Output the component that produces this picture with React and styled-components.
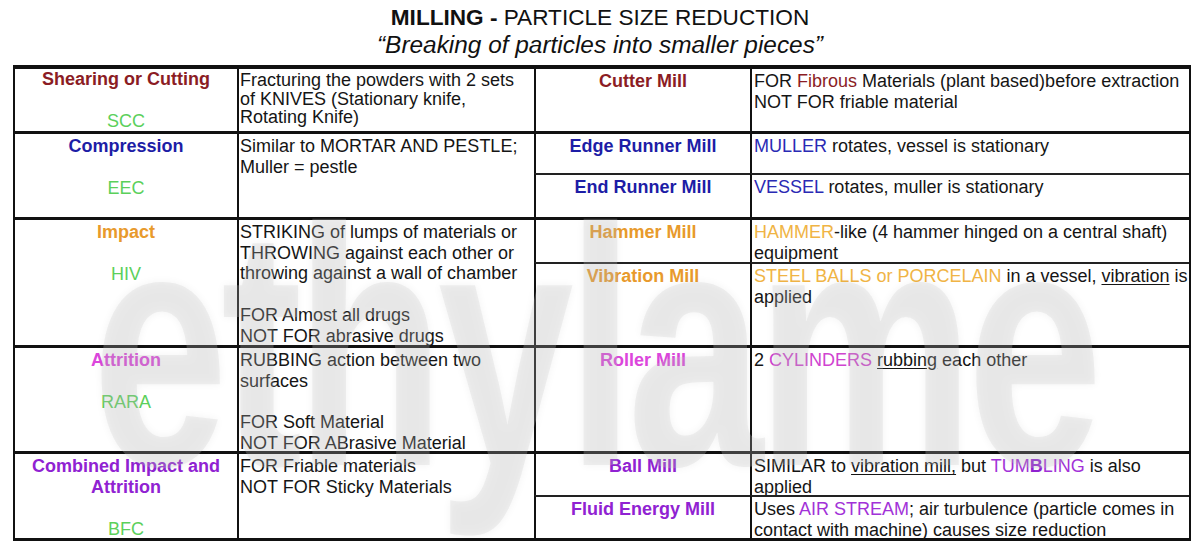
import React from "react";
import styled, { createGlobalStyle } from "styled-components";

const GlobalStyle = createGlobalStyle`
  html, body {
    margin: 0;
    padding: 0;
    background: #fff;
  }
  body {
    font-family: "Liberation Sans", Arial, sans-serif;
    color: #151515;
  }
`;

// palette taken from the chart
const MAROON = "#8b1c24";
const BLUE = "#1d1da6";
const BLUE_TEXT = "#2a2ab4";
const ORANGE = "#e89a2c";
const ORANGE_TEXT = "#f0b445";
const MAGENTA = "#dc46dc";
const MAGENTA_TEXT = "#d044d0";
const PURPLE = "#9022d2";
const PURPLE_TEXT = "#a232d8";
const GREEN = "#5bd05b";

const Page = styled.div`
  position: relative;
  width: 1200px;
  height: 556px;
  overflow: hidden;
  background: #fff;
`;

const Heading = styled.header`
  height: 65px;
  box-sizing: border-box;
  padding-top: 5px;
  text-align: center;
  color: #111;
`;

const Title = styled.h1`
  margin: 0;
  font-size: 22.6px;
  font-weight: normal;
  line-height: 26px;

  b {
    font-weight: bold;
  }
`;

const Subtitle = styled.p`
  margin: 0;
  font-size: 24.4px;
  font-style: italic;
  line-height: 27px;
`;

const Table = styled.div`
  margin-left: 13px;
  width: 1178px;
  box-sizing: border-box;
  border: 2px solid #111;
  border-top-width: 4px;
  border-bottom-width: 3px;
`;

const Group = styled.div`
  display: grid;
  grid-template-columns: 222px 297px 216px 439px;
  grid-template-rows: ${(p) => p.$rows};

  & + & {
    border-top: 3px solid #111;
  }
`;

const Method = styled.div`
  grid-row: 1 / -1;
  padding-top: ${(p) => p.$pad || "2px"};
  text-align: center;
  font-size: 18px;
  font-weight: bold;
  line-height: 21px;
  color: ${(p) => p.$color};
`;

const Code = styled.div`
  margin-top: 21px;
  font-weight: normal;
  color: ${GREEN};
`;

const Desc = styled.div`
  grid-row: 1 / -1;
  border-left: 2px solid #111;
  padding: 2px 2px 0 1px;
  font-size: 18px;
  line-height: ${(p) => p.$lh || "20.7px"};
  white-space: nowrap;
`;

const Gap = styled.div`
  height: ${(p) => p.$h || "20.7px"};
`;

const MillName = styled.div`
  border-left: 2px solid #111;
  border-top: ${(p) => (p.$split ? "2px solid #222" : "none")};
  padding-top: 2px;
  text-align: center;
  font-size: 18px;
  font-weight: bold;
  line-height: 21px;
  color: ${(p) => p.$color};
`;

const MillText = styled.div`
  border-left: 2px solid #111;
  border-top: ${(p) => (p.$split ? "2px solid #222" : "none")};
  padding: 2px 2px 0 2px;
  font-size: 18px;
  line-height: 20.7px;
  white-space: nowrap;
`;

const Hl = styled.span`
  color: ${(p) => p.$c};
  font-weight: ${(p) => (p.$bold ? "bold" : "normal")};
`;

const U = styled.span`
  text-decoration: underline;
  text-underline-offset: 2px;
`;

// faint watermark lying over the chart
const Watermark = styled.div`
  position: absolute;
  left: 92px;
  top: 177px;
  font-family: "Liberation Sans", Arial, sans-serif;
  font-size: 340px;
  font-weight: bold;
  line-height: 340px;
  letter-spacing: -10px;
  color: rgba(200, 200, 200, 0.26);
  text-shadow: 0 0 10px rgba(0, 0, 0, 0.05);
  transform: scaleX(0.72);
  transform-origin: left top;
  pointer-events: none;
  white-space: nowrap;
`;

const App = () => {
  return (
    <Page>
      <GlobalStyle />
      <Heading>
        <Title>
          <b>MILLING -</b> PARTICLE SIZE REDUCTION
        </Title>
        <Subtitle>“Breaking of particles into smaller pieces”</Subtitle>
      </Heading>

      <Table>
        <Group $rows="62px">
          <Method $color={MAROON} $pad="0px">
            Shearing or Cutting
            <Code>SCC</Code>
          </Method>
          <Desc $lh="18.5px">
            Fracturing the powders with 2 sets
            <br />
            of KNIVES (Stationary knife,
            <br />
            Rotating Knife)
          </Desc>
          <MillName $color={MAROON}>Cutter Mill</MillName>
          <MillText>
            FOR <Hl $c={MAROON}>Fibrous</Hl> Materials (plant based)before extraction
            <br />
            NOT FOR friable material
          </MillText>
        </Group>

        <Group $rows="39px 44px">
          <Method $color={BLUE}>
            Compression
            <Code>EEC</Code>
          </Method>
          <Desc>
            Similar to MORTAR AND PESTLE;
            <br />
            Muller = pestle
          </Desc>
          <MillName $color={BLUE}>Edge Runner Mill</MillName>
          <MillText>
            <Hl $c={BLUE_TEXT}>MULLER</Hl> rotates, vessel is stationary
          </MillText>
          <MillName $color={BLUE} $split>
            End Runner Mill
          </MillName>
          <MillText $split>
            <Hl $c={BLUE_TEXT}>VESSEL</Hl> rotates, muller is stationary
          </MillText>
        </Group>

        <Group $rows="42px 83px">
          <Method $color={ORANGE}>
            Impact
            <Code>HIV</Code>
          </Method>
          <Desc>
            STRIKING of lumps of materials or
            <br />
            THROWING against each other or
            <br />
            throwing against a wall of chamber
            <Gap />
            FOR Almost all drugs
            <br />
            NOT FOR abrasive drugs
          </Desc>
          <MillName $color={ORANGE}>Hammer Mill</MillName>
          <MillText>
            <Hl $c={ORANGE_TEXT}>HAMMER</Hl>-like (4 hammer hinged on a central shaft)
            <br />
            equipment
          </MillText>
          <MillName $color={ORANGE} $split>
            Vibration Mill
          </MillName>
          <MillText $split>
            <Hl $c={ORANGE_TEXT}>STEEL BALLS or PORCELAIN</Hl> in a vessel, <U>vibration</U> is
            <br />
            applied
          </MillText>
        </Group>

        <Group $rows="103px">
          <Method $color={MAGENTA}>
            Attrition
            <Code>RARA</Code>
          </Method>
          <Desc>
            RUBBING action between two
            <br />
            surfaces
            <Gap />
            FOR Soft Material
            <br />
            NOT FOR ABrasive Material
          </Desc>
          <MillName $color={MAGENTA}>Roller Mill</MillName>
          <MillText>
            2 <Hl $c={MAGENTA_TEXT}>CYLINDERS</Hl> <U>rubbing</U> each other
          </MillText>
        </Group>

        <Group $rows="41px 43px">
          <Method $color={PURPLE}>
            Combined Impact and
            <br />
            Attrition
            <Code>BFC</Code>
          </Method>
          <Desc>
            FOR Friable materials
            <br />
            NOT FOR Sticky Materials
          </Desc>
          <MillName $color={PURPLE}>Ball Mill</MillName>
          <MillText>
            SIMILAR to <U>vibration mill,</U> but{" "}
            <Hl $c={PURPLE_TEXT}>
              TUM<Hl $c={PURPLE} $bold>B</Hl>LING
            </Hl>{" "}
            is also
            <br />
            applied
          </MillText>
          <MillName $color={PURPLE} $split>
            Fluid Energy Mill
          </MillName>
          <MillText $split>
            Uses <Hl $c={PURPLE_TEXT}>AIR STREAM</Hl>; air turbulence (particle comes in
            <br />
            contact with machine) causes size reduction
          </MillText>
        </Group>
      </Table>

      <Watermark aria-hidden="true">ethylame</Watermark>
    </Page>
  );
};

export default App;
